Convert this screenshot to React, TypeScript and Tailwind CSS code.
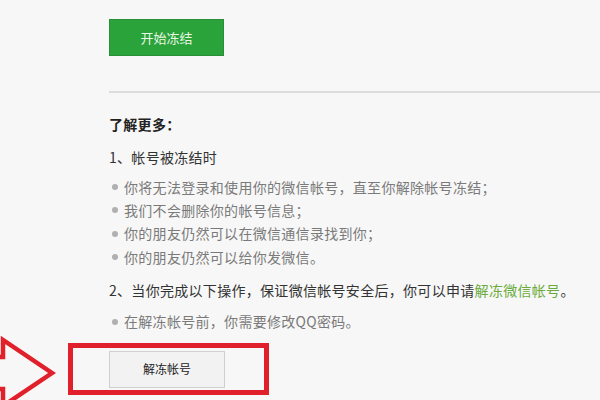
import React from "react";

const font = {
  fontFamily: '"Noto Sans CJK SC", "Noto Sans", sans-serif',
};

const bullets = [
  "你将无法登录和使用你的微信帐号，直至你解除帐号冻结；",
  "我们不会删除你的帐号信息；",
  "你的朋友仍然可以在微信通信录找到你；",
  "你的朋友仍然可以给你发微信。",
];

function Bullet({ children }: { children: React.ReactNode }) {
  return (
    <li className="flex items-center h-[23.3px]">
      <span className="ml-[3px] mr-[6px] w-[6px] h-[6px] rounded-full bg-[#b0b0b0]" />
      <span>{children}</span>
    </li>
  );
}

export default function App() {
  return (
    <div
      className="relative w-[600px] h-[400px] overflow-hidden bg-[#f7f7f7] text-[14px] text-[#333] tracking-[0.3px]"
      style={font}
    >
      <div className="flex flex-col pl-[109px]">
        <button className="mt-[19px] w-[115px] h-[37px] bg-[#2ba33b] border border-[#2a8d37] text-[13px] tracking-normal text-[#eaf7e4] flex items-center justify-center">
          开始冻结
        </button>

        <div className="mt-[35px] h-[2px] bg-[#dcdcdc]" />

        <div className="mt-[19px] h-[24px] leading-[24px] font-bold text-[#222]">
          了解更多：
        </div>

        <div className="mt-[9px] h-[24px] leading-[24px] text-[#333]">
          1、帐号被冻结时
        </div>

        <ul className="mt-[6.5px] text-[#7a7a7a]">
          {bullets.map((b) => (
            <Bullet key={b}>{b}</Bullet>
          ))}
        </ul>

        <div className="mt-[9px] h-[24px] leading-[24px] text-[#333]">
          2、当你完成以下操作，保证微信帐号安全后，你可以申请
          <span className="text-[#6aab3c]">解冻微信帐号</span>。
        </div>

        <ul className="mt-[8px] text-[#7a7a7a]">
          <li className="flex items-center h-[24px]">
            <span className="ml-[3px] mr-[6px] w-[6px] h-[6px] rounded-full bg-[#b0b0b0]" />
            <span>在解冻帐号前，你需要修改QQ密码。</span>
          </li>
        </ul>

        <button className="mt-[17px] w-[116px] h-[37px] bg-[#f2f2f2] border border-[#cfcfcf] text-[12px] tracking-normal text-[#222] flex items-center justify-center">
          解冻帐号
        </button>
      </div>

      {/* red highlight frame around the unfreeze button */}
      <div className="absolute left-[68px] top-[343px] w-[201px] h-[52px] border-[5px] border-[#e0212b]" />

      {/* outlined pointer arrow */}
      <svg
        className="absolute left-0 top-[330px]"
        width="60"
        height="70"
        viewBox="0 330 60 70"
      >
        <polygon
          points="-30,357 3,357 3,340 52,373 3,406 3,389 -30,389"
          fill="none"
          stroke="#e0212b"
          strokeWidth="4.5"
          strokeLinejoin="miter"
        />
      </svg>
    </div>
  );
}
